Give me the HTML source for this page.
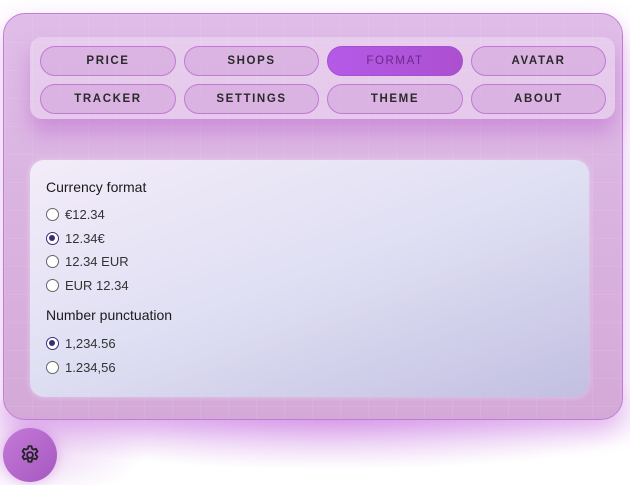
<!DOCTYPE html>
<html><head><style>
*{box-sizing:border-box;margin:0;padding:0}
body{width:630px;height:485px;overflow:hidden;background:#fff;font-family:"Liberation Sans",sans-serif;position:relative}
.glow{position:absolute;left:0;top:380px;width:630px;height:100px;background:radial-gradient(ellipse 360px 55px at 330px 35px,rgba(200,120,225,.55),rgba(255,255,255,0));}
.glow2{position:absolute;left:0;top:400px;width:200px;height:85px;background:radial-gradient(ellipse 110px 60px at 40px 40px,rgba(215,160,230,.45),rgba(255,255,255,0))}
.panel{position:absolute;left:3px;top:13px;width:620px;height:407px;border-radius:22px;border:1px solid #c07dd6;box-shadow:0 10px 24px rgba(200,110,225,.45);
background-image:linear-gradient(rgba(255,255,255,.07) 1px,transparent 1px),linear-gradient(90deg,rgba(255,255,255,.07) 1px,transparent 1px),linear-gradient(180deg,#e0bde8,#d4a9d8);background-size:28px 28px,28px 28px,100% 100%}
.nav{position:absolute;left:30px;top:37px;width:585px;height:82px;border-radius:12px;background:rgba(255,255,255,.25);box-shadow:0 14px 20px rgba(185,95,205,.45)}
.b{position:absolute;height:30px;border-radius:15px;border:1px solid #c07ad4;background:rgba(205,150,215,.45);font-size:11.5px;font-weight:bold;letter-spacing:1.6px;color:#2a2a2a;display:flex;align-items:center;justify-content:center}
.b.on{background:linear-gradient(90deg,#b45ae8,#ac4fd0);color:#6a2a8a;border-color:#a450d0;font-weight:normal}
.card{position:absolute;left:30px;top:160px;width:559px;height:237px;border-radius:14px;background:linear-gradient(160deg,#f3ecf9,#dfdff3 50%,#c2bfe1);box-shadow:0 0 6px rgba(255,255,255,.4)}
.h{position:absolute;left:46px;font-size:14px;color:#1a1a1a}
.r{position:absolute;left:46px;font-size:13px;color:#333;display:flex;align-items:center}
.r i{display:inline-block;width:13px;height:13px;border-radius:50%;border:1px solid #666;background:#fff;margin-right:6px;position:relative}
.r i.c{border:1.5px solid #3a2d78}
.r i.c:after{content:"";position:absolute;left:2px;top:2px;width:6px;height:6px;border-radius:50%;background:#3a2d78}
.gear{position:absolute;left:3px;top:428px;width:54px;height:54px;border-radius:50%;background:linear-gradient(135deg,#c47ad8,#a558c0);box-shadow:0 0 12px rgba(200,120,220,.5);display:flex;align-items:center;justify-content:center}
</style></head><body>
<div class="glow"></div>
<div class="glow2"></div>
<div class="panel"></div>
<div class="nav"></div>
<div class="b" style="left:40px;top:46px;width:136px">PRICE</div>
<div class="b" style="left:184px;top:46px;width:135px">SHOPS</div>
<div class="b on" style="left:327px;top:46px;width:136px">FORMAT</div>
<div class="b" style="left:471px;top:46px;width:135px">AVATAR</div>
<div class="b" style="left:40px;top:84px;width:136px">TRACKER</div>
<div class="b" style="left:184px;top:84px;width:135px">SETTINGS</div>
<div class="b" style="left:327px;top:84px;width:136px">THEME</div>
<div class="b" style="left:471px;top:84px;width:135px">ABOUT</div>
<div class="card"></div>
<div class="h" style="top:179px">Currency format</div>
<div class="r" style="top:207px"><i></i>€12.34</div>
<div class="r" style="top:231px"><i class="c"></i>12.34€</div>
<div class="r" style="top:254px"><i></i>12.34 EUR</div>
<div class="r" style="top:278px"><i></i>EUR 12.34</div>
<div class="h" style="top:307px">Number punctuation</div>
<div class="r" style="top:336px"><i class="c"></i>1,234.56</div>
<div class="r" style="top:360px"><i></i>1.234,56</div>
<div class="gear"><svg width="22" height="22" viewBox="0 0 24 24" fill="none" stroke="#222" stroke-width="1.9" stroke-linejoin="round"><path d="M10.3 2.5h3.4l.5 2.6 1.8 1 2.5-.9 1.7 2.9-2 1.8v2.1l2 1.8-1.7 2.9-2.5-.9-1.8 1-.5 2.6h-3.4l-.5-2.6-1.8-1-2.5.9-1.7-2.9 2-1.8V9.9l-2-1.8 1.7-2.9 2.5.9 1.8-1z"/><circle cx="12" cy="12" r="3.2"/></svg></div>
</body></html>
